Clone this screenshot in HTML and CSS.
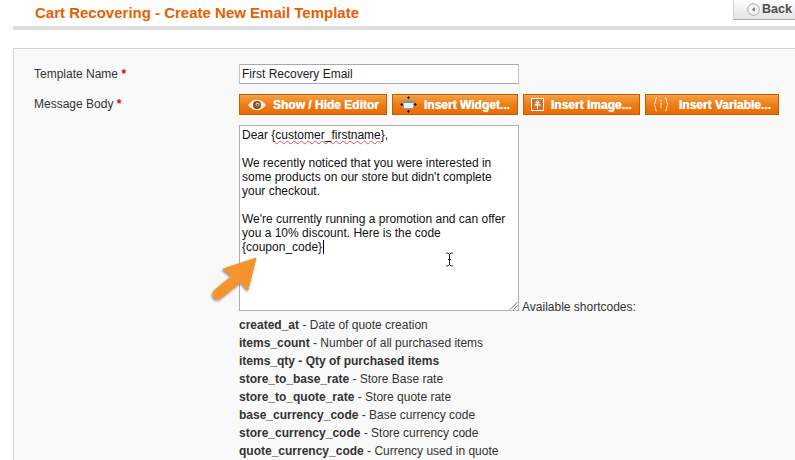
FILE: index.html
```html
<!DOCTYPE html>
<html lang="en">
<head>
<meta charset="utf-8">
<title>Cart Recovering - Create New Email Template</title>
<link rel="stylesheet" href="styles.css">
</head>
<body>
<div class="page">
  <header class="head">
    <h1 class="title">Cart Recovering - Create New Email Template</h1>
    <button class="back" type="button">
      <span class="back-icon"><svg width="13" height="13" viewBox="0 0 13 13"><circle cx="6.500" cy="6.500" r="5.800" fill="#f2f2f2" stroke="#aaa"/><path d="M7.800 4.200 4.800 6.500 7.800 8.800z" fill="#777"/></svg></span>
      Back
    </button>
  </header>
  <section class="panel">
    <div class="row row-name">
      <label class="label">Template Name <em class="req">*</em></label>
      <div class="input">First Recovery Email</div>
    </div>
    <div class="row">
      <label class="label">Message Body <em class="req">*</em></label>
      <div class="field">
        <div class="buttons">
          <button class="btn btn-a" type="button">
            <svg class="ico" width="18" height="12" viewBox="0 0 18 12"><path d="M0 6C3 2 6 .8 9 .8s6 1.200 9 5.200c-3 4-6 5.200-9 5.200S3 10 0 6z" fill="#fbeede"/><circle cx="9" cy="6" r="4" fill="#7d4e22"/><circle cx="9.500" cy="5.500" r="2" fill="#e9c79b"/><circle cx="9.500" cy="6" r="1" fill="#6b3f18"/></svg>
            Show / Hide Editor
          </button>
          <button class="btn btn-b" type="button">
            <svg class="ico" width="17" height="17" viewBox="0 0 17 17"><rect x="3.500" y="4.500" width="10" height="8" fill="#eef0f2" stroke="#9a9a9a"/><rect x="4" y="5" width="9" height="2" fill="#8d8d8d"/><path d="M8.500 1v2M8.500 14v2M1 8.500h2M14 8.500h2" stroke="#111" stroke-width="1.300"/><path d="M8.500 0 7 2h3zM8.500 17 7 15h3zM0 8.500 2 7v3zM17 8.500 15 7v3z" fill="#111"/></svg>
            Insert Widget...
          </button>
          <button class="btn btn-c" type="button">
            <svg class="ico" width="13" height="13" viewBox="0 0 13 13"><rect x=".5" y=".5" width="12" height="12" fill="#c9742a" stroke="#fff"/><path d="M6.500 2 9 4.500 7.500 4.800 10 7.500 7 7.500V11H6V7.500L3 7.500 5.500 4.800 4 4.500z" fill="#fff"/><path d="M5 5h1M7 6h1M6 3.500h1" stroke="#c9742a"/></svg>
            Insert Image...
          </button>
          <button class="btn btn-d" type="button">
            <svg class="ico" width="16" height="15" viewBox="0 0 16 15"><path d="M4 .5C2 .5 3.200 6 .8 7.500 3.200 9 2 14.500 4 14.500M12 .5c2 0 .8 5.500 3.200 7C12.800 9 14 14.500 12 14.500M8 6v5.500" fill="none" stroke="#fff" stroke-dasharray="2 .6"/><rect x="7.500" y="3" width="1" height="1.500" fill="#fff"/></svg>
            Insert Variable...
          </button>
        </div>
        <div class="editor-line">
          <div class="editor">
            <p class="para">Dear {<span class="spell">customer_firstname</span>},</p>
            <p class="para">We recently noticed that you were interested in<br>some products on our store but didn't complete<br>your checkout.</p>
            <p class="para">We're currently running a promotion and can offer<br>you a 10% discount. Here is the code<br>{coupon_code}<span class="caret"></span></p>
            <svg class="grip" width="9" height="9" viewBox="0 0 9 9"><path d="M1 8.500 8.500 1M4.500 8.500l4-4" stroke="#777" fill="none"/></svg>
            <svg class="ibeam" width="9" height="15" viewBox="0 0 9 15"><path d="M1 1c2 0 3 .5 3.500 1.500C5 1.500 6 1 8 1M4.500 2.500v10M1 14c2 0 3-.5 3.500-1.500C5 13.500 6 14 8 14M3 7.500h3" fill="none" stroke="#222"/></svg>
          </div>
          <span class="avail">Available shortcodes:</span>
        </div>
        <ul class="codes">
          <li><b>created_at</b> - Date of quote creation</li>
          <li><b>items_count</b> - Number of all purchased items</li>
          <li><b>items_qty - Qty of purchased items</b></li>
          <li><b>store_to_base_rate</b> - Store Base rate</li>
          <li><b>store_to_quote_rate</b> - Store quote rate</li>
          <li><b>base_currency_code</b> - Base currency code</li>
          <li><b>store_currency_code</b> - Store currency code</li>
          <li><b>quote_currency_code</b> - Currency used in quote</li>
        </ul>
      </div>
    </div>
  </section>
  <svg class="arrow" width="56" height="56" viewBox="0 0 56 56"><defs><filter id="s" x="-20%" y="-20%" width="140%" height="140%"><feDropShadow dx="-1" dy="1.500" stdDeviation="1.200" flood-color="#000" flood-opacity=".45"/></filter></defs><path d="M48 6 15 17l9 7L6.600 38.300a5 5 0 0 0 6.800 7.400L33 30l7 8z" fill="#f7932f" stroke="#f7932f" stroke-width="1" stroke-linejoin="round" filter="url(#s)"/></svg>
</div>
</body>
</html>
```
FILE: styles.css
```css
* { box-sizing: border-box; }
html, body { margin: 0; padding: 0; background: #fff; }
body { font-family: "Liberation Sans", Arial, sans-serif; font-size: 12px; color: #2f2f2f; }
.page { position: relative; width: 795px; height: 460px; overflow: hidden; }

.head { display: flex; justify-content: space-between; align-items: flex-start; height: 30px; margin-left: 13px; padding-left: 22px; border-bottom: 4px solid #dedede; }
.title { margin: 5px 0 0; font-size: 15px; line-height: 16px; font-weight: bold; color: #eb5e00; }
.back { display: flex; align-items: center; gap: 2px; width: 62px; height: 20px; padding: 0 0 0 13px; border: 1px solid #d4d4d4; border-top: 0; border-right: 0; border-bottom: 1px solid #aaa; background: linear-gradient(#fdfdfd, #e4e4e4); font: bold 12.500px/1 "Liberation Sans", Arial, sans-serif; color: #4d4d4d; white-space: nowrap; }
.back-icon { display: flex; }

.panel { margin: 18px 0 0 13px; height: 420px; padding: 15px 0 0 20px; background: #f9f9f9; border: 1px solid #d6d6d6; border-right: 0; border-bottom: 0; }
.row { display: flex; }
.row-name { margin-bottom: 10px; }
.label { width: 205px; flex: none; padding-top: 3px; line-height: 14px; color: #333; }
.req { font-style: normal; font-weight: bold; color: #d40707; }
.input { width: 280px; height: 20px; padding: 2px 2px; background: #fff; border: 1px solid #aaa; border-left-color: #c6c6c6; border-right-color: #c6c6c6; line-height: 14px; color: #1c1c1c; }
.field { display: flex; flex-direction: column; }

.buttons { display: flex; gap: 5px; height: 21px; width: 560px; }
.btn { display: flex; align-items: center; height: 21px; padding: 0; border: 1px solid #c75c00; background: linear-gradient(#f5a040, #ee7a14 55%, #ec6a00); color: #fff; font: bold 12px/1 "Liberation Sans", Arial, sans-serif; text-shadow: 0 0 1px #fff; white-space: nowrap; }
.btn-a { width: 148px; padding-left: 8px; gap: 7px; }
.btn-b { width: 126px; padding-left: 7px; gap: 7px; }
.btn-c { width: 117px; padding-left: 7px; gap: 7px; }
.btn-d { width: 134px; padding-left: 7px; gap: 10px; }

.editor-line { display: flex; align-items: flex-end; margin-top: 10px; }
.editor { position: relative; width: 280px; height: 186px; padding: 2px 2px; background: #fff; border: 1px solid #b0b0b0; color: #111; line-height: 14px; }
.para { margin: 0 0 14px; }
.spell { text-decoration: underline wavy #e05050 1px; text-underline-offset: 1px; }
.caret { display: inline-block; width: 1px; height: 14px; background: #000; vertical-align: top; margin-left: 1px; }
.grip { position: absolute; right: 0; bottom: 0; }
.ibeam { position: absolute; left: 205px; top: 126px; }
.avail { margin: 0 0 -3px 3px; line-height: 14px; color: #333; }

.codes { list-style: none; margin: 5px 0 0; padding: 0; }
.codes li { line-height: 18px; color: #333; }
.ico { flex: none; }
.arrow { position: absolute; left: 208px; top: 252px; }
```
